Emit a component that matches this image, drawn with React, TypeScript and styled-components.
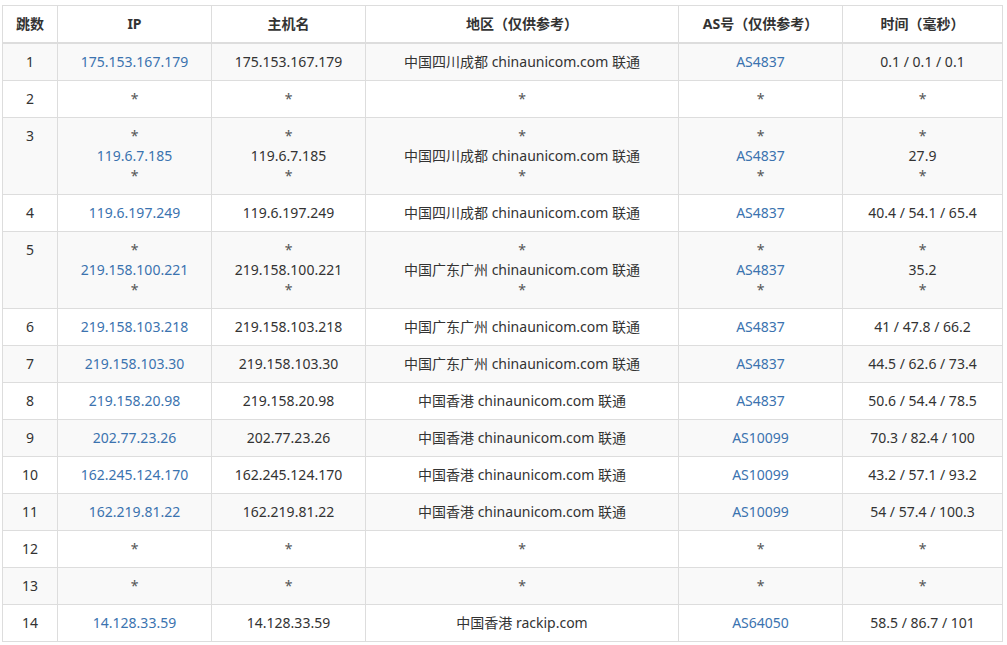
import React from "react";
import styled, { createGlobalStyle } from "styled-components";

const Global = createGlobalStyle`
  html, body { margin: 0; padding: 0; background: #fff; }
  body { font-family: "Noto Sans", "Noto Sans CJK SC", sans-serif; font-size: 14px; color: #333; }
`;

const Wrap = styled.div`
  padding: 5px 6px 0 2px;
`;

const Table = styled.table`
  width: 1000px;
  border-collapse: collapse;
  border-spacing: 0;
  table-layout: fixed;
  border: 1px solid #ddd;
`;

const Th = styled.th`
  border: 1px solid #ddd;
  border-bottom: 2px solid #ddd;
  padding: 8px;
  line-height: 20px;
  font-weight: bold;
  text-align: center;
  vertical-align: bottom;
  color: #333;
`;

const Tr = styled.tr<{ $striped: boolean }>`
  background: ${(p) => (p.$striped ? "#f9f9f9" : "#fff")};
`;

const Td = styled.td`
  border: 1px solid #ddd;
  padding: 8px;
  line-height: 20px;
  text-align: center;
  vertical-align: top;
  color: #333;
`;

const Link = styled.a`
  color: #3b73af;
  text-decoration: none;
`;

const Star = styled.span`
  color: #555;
`;

type Row = {
  hop: number;
  ip: string[];
  host: string[];
  area: string[];
  as: string[];
  time: string[];
};

const S = "*";

const rows: Row[] = [
  { hop: 1, ip: ["175.153.167.179"], host: ["175.153.167.179"], area: ["中国四川成都 chinaunicom.com 联通"], as: ["AS4837"], time: ["0.1 / 0.1 / 0.1"] },
  { hop: 2, ip: [S], host: [S], area: [S], as: [S], time: [S] },
  { hop: 3, ip: [S, "119.6.7.185", S], host: [S, "119.6.7.185", S], area: [S, "中国四川成都 chinaunicom.com 联通", S], as: [S, "AS4837", S], time: [S, "27.9", S] },
  { hop: 4, ip: ["119.6.197.249"], host: ["119.6.197.249"], area: ["中国四川成都 chinaunicom.com 联通"], as: ["AS4837"], time: ["40.4 / 54.1 / 65.4"] },
  { hop: 5, ip: [S, "219.158.100.221", S], host: [S, "219.158.100.221", S], area: [S, "中国广东广州 chinaunicom.com 联通", S], as: [S, "AS4837", S], time: [S, "35.2", S] },
  { hop: 6, ip: ["219.158.103.218"], host: ["219.158.103.218"], area: ["中国广东广州 chinaunicom.com 联通"], as: ["AS4837"], time: ["41 / 47.8 / 66.2"] },
  { hop: 7, ip: ["219.158.103.30"], host: ["219.158.103.30"], area: ["中国广东广州 chinaunicom.com 联通"], as: ["AS4837"], time: ["44.5 / 62.6 / 73.4"] },
  { hop: 8, ip: ["219.158.20.98"], host: ["219.158.20.98"], area: ["中国香港 chinaunicom.com 联通"], as: ["AS4837"], time: ["50.6 / 54.4 / 78.5"] },
  { hop: 9, ip: ["202.77.23.26"], host: ["202.77.23.26"], area: ["中国香港 chinaunicom.com 联通"], as: ["AS10099"], time: ["70.3 / 82.4 / 100"] },
  { hop: 10, ip: ["162.245.124.170"], host: ["162.245.124.170"], area: ["中国香港 chinaunicom.com 联通"], as: ["AS10099"], time: ["43.2 / 57.1 / 93.2"] },
  { hop: 11, ip: ["162.219.81.22"], host: ["162.219.81.22"], area: ["中国香港 chinaunicom.com 联通"], as: ["AS10099"], time: ["54 / 57.4 / 100.3"] },
  { hop: 12, ip: [S], host: [S], area: [S], as: [S], time: [S] },
  { hop: 13, ip: [S], host: [S], area: [S], as: [S], time: [S] },
  { hop: 14, ip: ["14.128.33.59"], host: ["14.128.33.59"], area: ["中国香港 rackip.com"], as: ["AS64050"], time: ["58.5 / 86.7 / 101"] },
];

const Lines: React.FC<{ items: string[]; link?: boolean }> = ({ items, link }) => (
  <>
    {items.map((t, i) => (
      <div key={i}>
        {t === S ? <Star>*</Star> : link ? <Link href="#">{t}</Link> : t}
      </div>
    ))}
  </>
);

export default function App() {
  return (
    <Wrap>
      <Global />
      <Table>
        <colgroup>
          <col style={{ width: 55 }} />
          <col style={{ width: 154 }} />
          <col style={{ width: 154 }} />
          <col style={{ width: 313 }} />
          <col style={{ width: 164 }} />
          <col style={{ width: 160 }} />
        </colgroup>
        <thead>
          <tr>
            <Th>跳数</Th>
            <Th>IP</Th>
            <Th>主机名</Th>
            <Th>地区（仅供参考）</Th>
            <Th>AS号（仅供参考）</Th>
            <Th>时间（毫秒）</Th>
          </tr>
        </thead>
        <tbody>
          {rows.map((r, i) => (
            <Tr key={r.hop} $striped={i % 2 === 0}>
              <Td>{r.hop}</Td>
              <Td><Lines items={r.ip} link /></Td>
              <Td><Lines items={r.host} /></Td>
              <Td><Lines items={r.area} /></Td>
              <Td><Lines items={r.as} link /></Td>
              <Td><Lines items={r.time} /></Td>
            </Tr>
          ))}
        </tbody>
      </Table>
    </Wrap>
  );
}
